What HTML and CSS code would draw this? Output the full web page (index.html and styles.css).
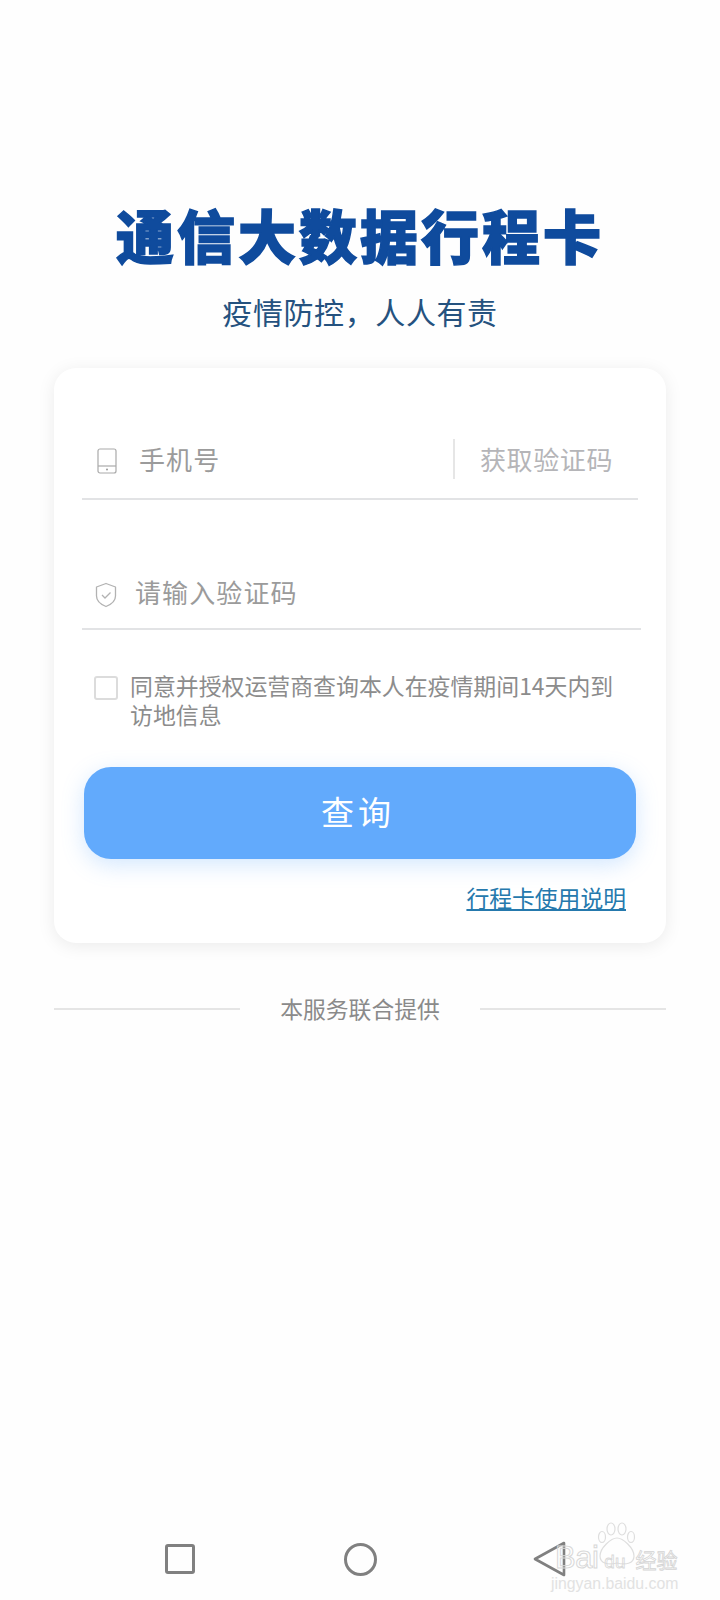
FILE: index.html
```html
<!DOCTYPE html>
<html lang="zh-CN">
<head>
<meta charset="utf-8">
<title>通信大数据行程卡</title>
<link rel="stylesheet" href="styles.css">
</head>
<body>
<div class="page">
  <header class="head">
    <h1 class="title">通信大数据行程卡</h1>
    <p class="subtitle">疫情防控，人人有责</p>
  </header>
  <section class="card">
    <div class="field field-phone">
      <svg class="ico ico-phone" viewBox="0 0 20 26" width="20" height="26"><rect x="1" y="1" width="18" height="24" rx="2" fill="none" stroke="#aaa" stroke-width="1.2"/><path d="M1 18h18" stroke="#aaa" stroke-width="1.2"/><circle cx="10" cy="21.5" r="1" fill="#999"/></svg>
      <span class="ph grow">手机号</span>
      <span class="sep"></span>
      <span class="code">获取验证码</span>
    </div>
    <div class="field field-code">
      <svg class="ico ico-shield" viewBox="0 0 22 26" width="22" height="26"><path d="M11 1.5 20.5 5v9c0 5-4.500 8.500-9.500 10.500C6 22.500 1.500 19 1.500 14V5z" fill="none" stroke="#b2b2b2" stroke-width="1.300" stroke-linejoin="round"/><path d="m7 13 3 3 5.500-5.500" fill="none" stroke="#b2b2b2" stroke-width="1.300"/></svg>
      <span class="ph">请输入验证码</span>
    </div>
    <div class="agree">
      <span class="box"></span>
      <p class="agree-text">同意并授权运营商查询本人在疫情期间14天内到访地信息</p>
    </div>
    <button class="btn" type="button">查询</button>
    <div class="help"><a class="help-link">行程卡使用说明</a></div>
  </section>
  <div class="provider">
    <span class="rule"></span>
    <span class="provider-text">本服务联合提供</span>
    <span class="rule"></span>
  </div>
  <nav class="nav">
    <span class="nav-square"></span>
    <span class="nav-circle"></span>
    <svg class="nav-back" viewBox="0 0 34 36" width="34" height="36"><path d="M31 2 2 18l29 16z" fill="none" stroke="#808080" stroke-width="2.600" stroke-linejoin="round"/></svg>
  </nav>
  <div class="mark">
    <svg class="paw" viewBox="0 0 40 44" width="40" height="44"><g fill="none" stroke="#dedede" stroke-width="1.200"><ellipse cx="5" cy="15" rx="3.500" ry="5.500"/><ellipse cx="14" cy="7" rx="4" ry="6"/><ellipse cx="25" cy="7" rx="4" ry="6"/><ellipse cx="34" cy="15" rx="3.500" ry="5.500"/><path d="M20 16c6 0 17 10 17 18 0 8-9 9-17 7-8 2-17 1-17-7 0-8 11-18 17-18z"/></g></svg>
    <div class="mark-row"><span class="mark-bai">Bai</span><span class="mark-du">du</span><span class="mark-jy">经验</span></div>
    <div class="mark-url">jingyan.baidu.com</div>
  </div>
</div>
</body>
</html>
```
FILE: styles.css
```css
* { box-sizing: border-box; }
html, body { margin: 0; padding: 0; background: #fff; }
body { font-family: "Noto Sans CJK SC", "Noto Sans", sans-serif; }
.page {
  position: relative;
  width: 720px;
  height: 1600px;
  overflow: hidden;
  display: flex;
  flex-direction: column;
  background: #fefefe;
}
.head { padding-top: 200px; text-align: center; }
.title {
  margin: 0;
  font-size: 58px;
  line-height: 68px;
  font-weight: 900;
  letter-spacing: 3px;
  color: #0f4b9d;
  -webkit-text-stroke: 1.5px #0f4b9d;
  white-space: nowrap;
}
.subtitle {
  margin: 21px 0 0;
  font-size: 30px;
  line-height: 44px;
  letter-spacing: .6px;
  color: #25527f;
}
.card {
  margin: 35px 54px 0;
  height: 575px;
  padding: 0 28px 0;
  background: #fff;
  border-radius: 22px;
  box-shadow: 0 3px 18px rgba(0, 0, 0, .08);
}
.field {
  display: flex;
  align-items: center;
  border-bottom: 2px solid #e2e3e5;
}
.field-phone { height: 132px; padding: 60px 0 0 15px; }
.field-code { height: 130px; margin-right: -3px; padding: 63px 0 0 13px; }
.ico-phone { margin: -4px 22px 0 0; flex: none; }
.ico-shield { margin: -2px 18px 0 0; flex: none; }
.ph { font-size: 26px; line-height: 40px; letter-spacing: 1.100px; color: #9b9b9b; margin-top: -8px; }
.grow { flex: 1; }
.sep { width: 2px; height: 40px; background: #e6e6e6; margin: -8px 25px 0 0; }
.code { font-size: 26px; line-height: 40px; letter-spacing: .6px; color: #b5b5b8; margin: -8px 25px 0 0; }
.agree { display: flex; margin-top: 41px; padding-left: 12px; }
.box {
  flex: none;
  width: 24px;
  height: 24px;
  margin: 5px 12px 0 0;
  background: #fff;
  border: 2px solid #dcdcdc;
  border-radius: 3px;
}
.agree-text {
  margin: 0;
  width: 490px;
  font-size: 22.900px;
  line-height: 29px;
  color: #8c8c8c;
}
.btn {
  display: block;
  width: 552px;
  height: 92px;
  margin: 38px 0 0 2px;
  padding: 0 4px 5px 0;
  border: 0;
  border-radius: 27px;
  background: #62aafc;
  box-shadow: 0 6px 22px rgba(98, 170, 252, .28);
  color: #fff;
  font-family: inherit;
  font-size: 33px;
  letter-spacing: 4px;
}
.help { margin-top: 21px; text-align: right; padding-right: 12px; }
.help-link {
  font-size: 22.800px;
  line-height: 36px;
  color: #2579ad;
  text-decoration: underline;
}
.provider {
  display: flex;
  align-items: center;
  margin: 49px 54px 0;
  height: 34px;
}
.rule { flex: none; width: 186px; height: 2px; background: #e5e5e5; }
.provider-text {
  flex: 1;
  text-align: center;
  font-size: 22.800px;
  line-height: 34px;
  color: #8a8a8a;
}
.nav {
  margin-top: auto;
  display: flex;
  align-items: center;
  gap: 149px;
  padding: 0 0 23px 165px;
}
.nav-square { width: 30px; height: 30px; border: 3px solid #808080; border-radius: 3px; }
.nav-circle { width: 33px; height: 33px; border: 3px solid #808080; border-radius: 50%; }
.nav-back { margin-left: 7px; }
.mark {
  position: absolute;
  left: 555px;
  top: 1526px;
  width: 130px;
}
.paw { position: absolute; left: 42px; top: -4px; }
.mark-row { position: relative; display: flex; align-items: baseline; padding-top: 18px; height: 46px; }
.mark-bai {
  font-family: "Liberation Sans", sans-serif;
  font-size: 31px;
  line-height: 28px;
  letter-spacing: -.5px;
  color: transparent;
  -webkit-text-stroke: 1px #d8d8d8;
}
.mark-du {
  font-family: "Liberation Sans", sans-serif;
  font-size: 19px;
  line-height: 28px;
  margin-left: 6px;
  color: transparent;
  -webkit-text-stroke: .8px #d8d8d8;
}
.mark-jy {
  font-size: 21px;
  line-height: 28px;
  margin-left: 10px;
  white-space: nowrap;
  color: transparent;
  -webkit-text-stroke: .8px #d4d4d4;
}
.mark-url {
  position: relative;
  margin: 3px 0 0 -4px;
  font-family: "Liberation Sans", sans-serif;
  font-size: 15.800px;
  line-height: 18px;
  color: #e2e2e2;
  white-space: nowrap;
}
```
